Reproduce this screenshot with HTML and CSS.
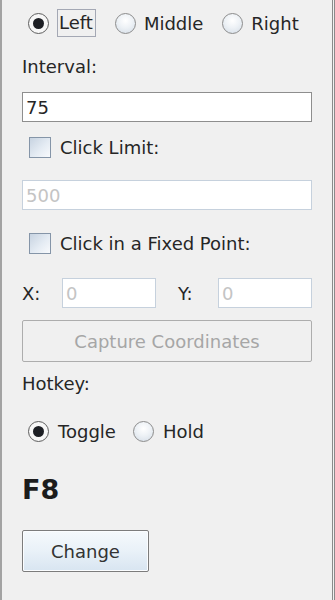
FILE: index.html
```html
<!DOCTYPE html>
<html lang="en">
<head>
    <meta charset="UTF-8">
    <meta name="viewport" content="width=device-width, initial-scale=1.0">
    <title>Auto Clicker</title>
    <link rel="stylesheet" href="styles.css">
</head>
<body>
    <div class="panel">
        <div class="radio-row">
            <label class="option"><span class="radio checked"></span><span class="focus">Left</span></label>
            <label class="option"><span class="radio"></span>Middle</label>
            <label class="option"><span class="radio"></span>Right</label>
        </div>
        <div class="label interval-label">Interval:</div>
        <input type="text" class="field" value="75">
        <div class="check-row first-check"><span class="check"></span>Click Limit:</div>
        <input type="text" class="field limit-field" value="500" disabled>
        <div class="check-row fixed-check"><span class="check"></span>Click in a Fixed Point:</div>
        <div class="xy-row">
            <span>X:</span>
            <input type="text" class="field" value="0" disabled>
            <span class="y-label">Y:</span>
            <input type="text" class="field" value="0" disabled>
        </div>
        <div class="button disabled">Capture Coordinates</div>
        <div class="label hotkey-label">Hotkey:</div>
        <div class="radio-row hotkey-row">
            <label class="option"><span class="radio checked"></span>Toggle</label>
            <label class="option"><span class="radio"></span>Hold</label>
        </div>
        <div class="hotkey">F8</div>
        <div class="button change">Change</div>
    </div>
</body>
</html>
```

FILE: styles.css
```css
* {
    box-sizing: border-box;
}
body {
    margin: 0;
    padding: 0;
    background-color: #f0f0f0;
    font-family: "DejaVu Sans", "Noto Sans", sans-serif;
    font-size: 18px;
    color: #262626;
}
.panel {
    width: 335px;
    height: 600px;
    padding: 9px 20px 0 20px;
    border-left: 2px solid #a3a3a3;
    border-right: 3px double #8a8a8a;
    background-color: #f0f0f0;
}
.radio-row {
    display: flex;
    align-items: center;
    height: 28px;
    padding-left: 6px;
}
.option {
    display: flex;
    align-items: center;
    gap: 8px;
    margin-right: 19px;
}
.radio {
    position: relative;
    width: 21px;
    height: 21px;
    border-radius: 50%;
    border: 1px solid #8c8c8c;
    background: radial-gradient(circle at 50% 35%, #ffffff 0%, #eef2f6 45%, #d3dce6 100%);
}
.radio.checked {
    border-color: #5e5e5e;
    background: #f7f7f7;
}
.radio.checked::after {
    content: "";
    position: absolute;
    left: 4px;
    top: 4px;
    width: 11px;
    height: 11px;
    border-radius: 50%;
    background: #1d1f24;
}
.focus {
    border: 1px solid #a4a8b4;
    padding: 0 2px 0 1px;
    line-height: 26px;
}
.label {
    height: 22px;
    line-height: 22px;
}
.interval-label {
    margin-top: 19px;
}
.field {
    display: block;
    width: 100%;
    height: 30px;
    margin: 14px 0 0 0;
    padding: 0 3px;
    font-family: inherit;
    font-size: 18px;
    color: #262626;
    background: #ffffff;
    border: 1px solid #8e8e8e;
    border-radius: 0;
    outline: none;
}
.field:disabled {
    color: #c4c4c4;
    border-color: #c6d1dd;
    background: #ffffff;
}
.check-row {
    display: flex;
    align-items: center;
    gap: 9px;
    height: 22px;
    padding-left: 7px;
}
.first-check {
    margin-top: 14px;
}
.limit-field {
    margin-top: 22px;
}
.fixed-check {
    margin-top: 22px;
}
.check {
    width: 22px;
    height: 21px;
    border: 1px solid #8595a8;
    background: linear-gradient(135deg, #c7d3e1 0%, #e4ebf3 55%, #f8fafc 100%);
}
.xy-row {
    display: grid;
    grid-template-columns: 40px 94px 1fr 94px;
    align-items: center;
    height: 30px;
    margin-top: 24px;
}
.xy-row .field {
    margin: 0;
}
.y-label {
    padding-left: 22px;
}
.button {
    display: flex;
    align-items: center;
    justify-content: center;
    height: 42px;
    margin-top: 12px;
    border: 1px solid #7c7c7c;
    border-radius: 2px;
}
.button.disabled {
    color: #a6a6a6;
    border-color: #adadad;
    background: #f0f0f0;
}
.hotkey-label {
    margin-top: 11px;
}
.hotkey-row {
    margin-top: 22px;
}
.hotkey-row .option {
    gap: 9px;
    margin-right: 17px;
}
.hotkey {
    margin-top: 30px;
    font-size: 27px;
    font-weight: bold;
    line-height: 30px;
    color: #1c1c1c;
}
.change {
    width: 127px;
    margin-top: 25px;
    color: #333333;
    background: linear-gradient(#f5f9fc 0%, #e9f1f8 50%, #d8e5f1 100%);
    box-shadow: inset 0 0 0 1px #fbfdff;
}
```
